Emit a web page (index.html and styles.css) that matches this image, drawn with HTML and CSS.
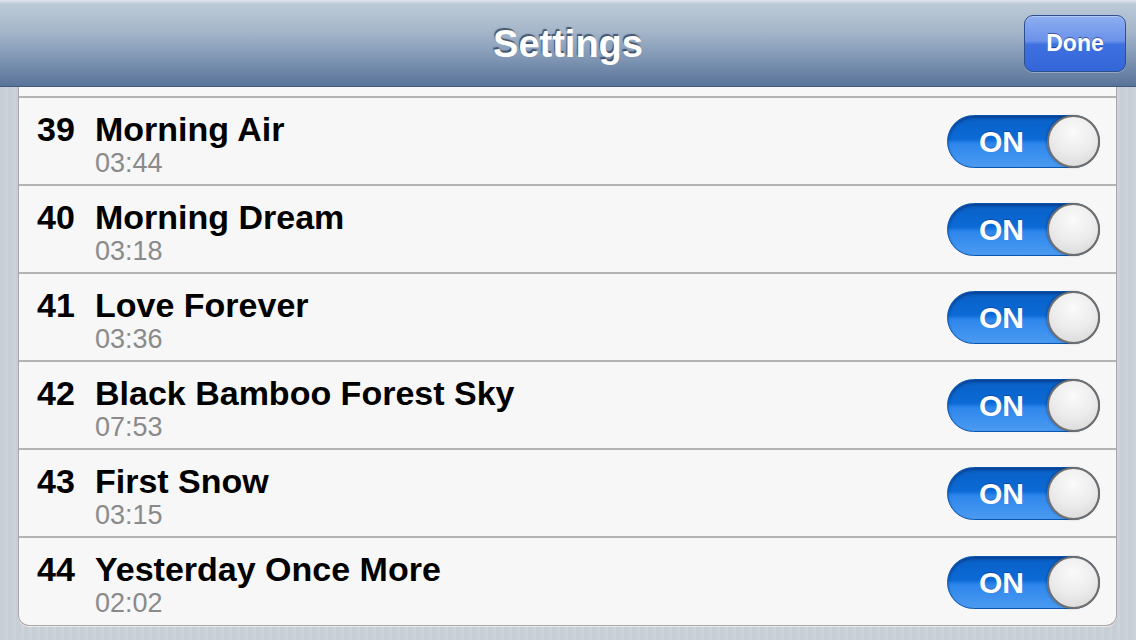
FILE: index.html
```html
<!DOCTYPE html>
<html>
<head>
<meta charset="utf-8">
<link rel="stylesheet" href="styles.css">
</head>
<body>
<div class="screen">
  <header class="navbar">
    <div class="nav-side"></div>
    <h1 class="nav-title">Settings</h1>
    <div class="nav-side nav-right"><button class="done-btn">Done</button></div>
  </header>
  <main class="content">
    <section class="card">
      <div class="card-top"></div>
      <div class="row">
        <div class="num">39</div>
        <div class="info"><div class="title">Morning Air</div><div class="time">03:44</div></div>
        <div class="switch"><span class="switch-label">ON</span><span class="knob"></span></div>
      </div>
      <div class="row">
        <div class="num">40</div>
        <div class="info"><div class="title">Morning Dream</div><div class="time">03:18</div></div>
        <div class="switch"><span class="switch-label">ON</span><span class="knob"></span></div>
      </div>
      <div class="row">
        <div class="num">41</div>
        <div class="info"><div class="title">Love Forever</div><div class="time">03:36</div></div>
        <div class="switch"><span class="switch-label">ON</span><span class="knob"></span></div>
      </div>
      <div class="row">
        <div class="num">42</div>
        <div class="info"><div class="title">Black Bamboo Forest Sky</div><div class="time">07:53</div></div>
        <div class="switch"><span class="switch-label">ON</span><span class="knob"></span></div>
      </div>
      <div class="row">
        <div class="num">43</div>
        <div class="info"><div class="title">First Snow</div><div class="time">03:15</div></div>
        <div class="switch"><span class="switch-label">ON</span><span class="knob"></span></div>
      </div>
      <div class="row last">
        <div class="num">44</div>
        <div class="info"><div class="title">Yesterday Once More</div><div class="time">02:02</div></div>
        <div class="switch"><span class="switch-label">ON</span><span class="knob"></span></div>
      </div>
    </section>
  </main>
</div>
</body>
</html>
```

FILE: styles.css
```css
html, body {
  margin: 0;
  padding: 0;
}
body {
  width: 1136px;
  height: 640px;
  overflow: hidden;
  font-family: "Liberation Sans", Arial, sans-serif;
}
.screen {
  width: 1136px;
  height: 640px;
  display: flex;
  flex-direction: column;
  background: repeating-linear-gradient(90deg, #c7ced6 0px, #c7ced6 5px, #cdd3da 5px, #cdd3da 8px);
}
.navbar {
  height: 87px;
  box-sizing: border-box;
  display: grid;
  grid-template-columns: 1fr auto 1fr;
  align-items: center;
  background: linear-gradient(180deg, #e2e6f0 0px, #bccad8 4px, #a6b7ca 30px, #8ba0bb 50px, #6f88a9 70px, #5a7499 86px);
  border-bottom: 1px solid #42587d;
  flex-shrink: 0;
}
.nav-title {
  margin: 0;
  font-size: 38px;
  font-weight: bold;
  color: #ffffff;
  text-shadow: -1px -2px 1px rgba(40, 55, 80, 0.75);
  line-height: 44px;
  padding-top: 1px;
}
.nav-right {
  display: flex;
  justify-content: flex-end;
  padding-right: 10px;
}
.done-btn {
  width: 102px;
  height: 57px;
  border-radius: 9px;
  border: 1px solid #2d4f8e;
  background: linear-gradient(180deg, #8daef0 0%, #6b92ea 45%, #3f70e0 52%, #3366d8 100%);
  box-shadow: inset 0 1px 0 rgba(255,255,255,0.35), 0 1px 0 rgba(255,255,255,0.3);
  color: #ffffff;
  font-family: "Liberation Sans", Arial, sans-serif;
  font-weight: bold;
  font-size: 23px;
  text-shadow: 0 -1px 0 rgba(0, 0, 60, 0.45);
  padding: 0;
}
.content {
  flex: 1;
  padding: 0 19px 13px 18px;
  display: flex;
  flex-direction: column;
}
.card {
  background: #f7f7f7;
  border: 1px solid #a8a8a8;
  border-top: none;
  border-radius: 0 0 11px 11px;
  box-shadow: 0 1px 0 rgba(255,255,255,0.6);
  display: flex;
  flex-direction: column;
}
.card-top {
  height: 9px;
}
.row {
  height: 86px;
  border-top: 2px solid #b3b3b3;
  display: flex;
  align-items: flex-start;
  padding: 0 16px 0 18px;
}
.row.last {
  height: 87px;
}
.num {
  width: 58px;
  font-size: 34px;
  font-weight: bold;
  color: #000;
  line-height: 36px;
  padding-top: 13px;
}
.info {
  flex: 1;
  padding-top: 13px;
}
.title {
  font-size: 34px;
  font-weight: bold;
  color: #000;
  line-height: 36px;
}
.time {
  font-size: 27px;
  color: #8a8a8a;
  line-height: 30px;
  margin-top: 1px;
}
.switch {
  align-self: center;
  position: relative;
  width: 153px;
  height: 53px;
  box-sizing: border-box;
  border-radius: 27px;
  border: 1px solid #0a55b0;
  background: linear-gradient(180deg, #0a5fc6 0%, #0b6ad6 45%, #2f87ec 55%, #4a9af0 100%);
  box-shadow: inset 0 2px 3px rgba(0,0,40,0.35);
  margin-top: 1px;
}
.switch-label {
  position: absolute;
  left: 31px;
  top: 0;
  line-height: 51px;
  font-size: 30px;
  font-weight: bold;
  color: #ffffff;
  text-shadow: 0 -1px 0 rgba(0,0,80,0.3);
}
.knob {
  position: absolute;
  right: -1px;
  top: -1px;
  width: 53px;
  height: 53px;
  box-sizing: border-box;
  border-radius: 50%;
  border: 2px solid #6e6e6e;
  background: radial-gradient(circle at 50% 30%, #fafafa 0%, #ececec 50%, #d4d4d4 100%);
  box-shadow: -1px 0 2px rgba(0,0,0,0.25);
}
```
